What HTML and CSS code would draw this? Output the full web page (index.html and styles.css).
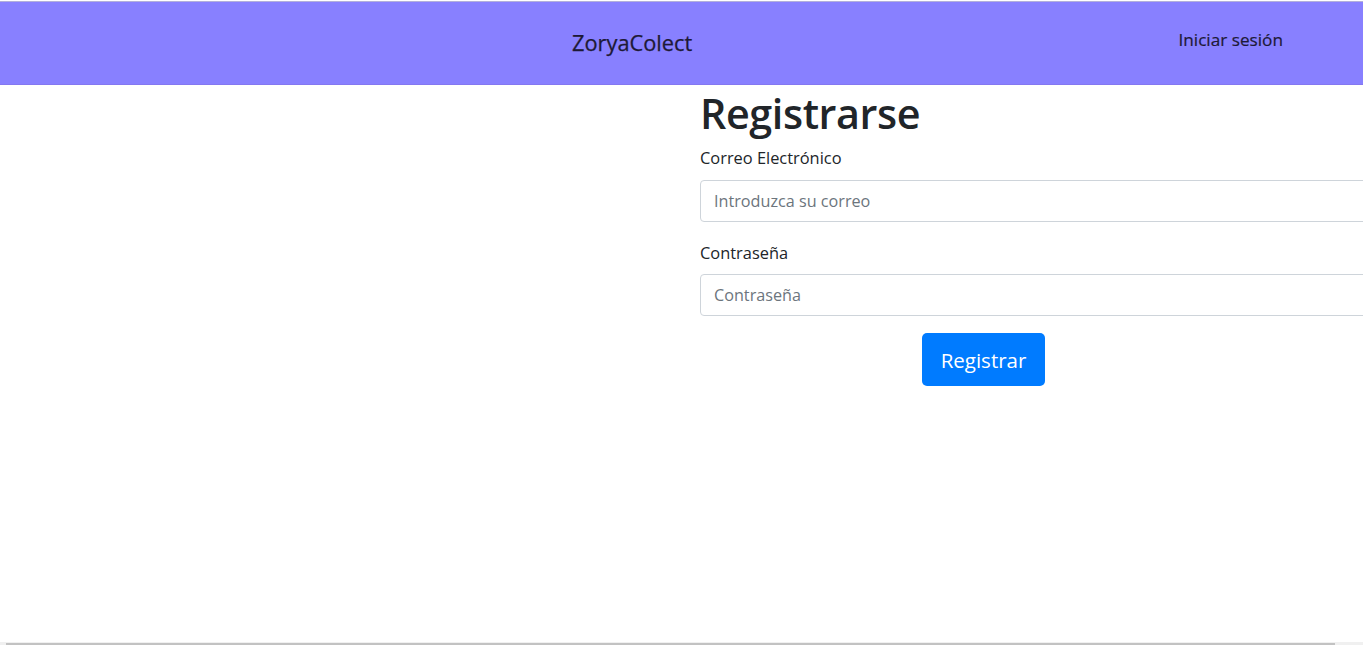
FILE: index.html
```html
<!DOCTYPE html>
<html lang="es">
<head>
<meta charset="utf-8">
<title>ZoryaColect - Registrarse</title>
<link rel="stylesheet" href="styles.css">
</head>
<body>
<header class="navbar">
  <a class="brand" href="#">ZoryaColect</a>
  <a class="nav-link" href="#">Iniciar sesión</a>
</header>
<main class="row">
  <div class="col-left"></div>
  <div class="col-form">
    <h1 class="title">Registrarse</h1>
    <form class="form">
      <div class="group">
        <label class="label" for="email">Correo Electrónico</label>
        <input class="input" id="email" type="email" placeholder="Introduzca su correo">
      </div>
      <div class="group">
        <label class="label label-pass" for="pass">Contraseña</label>
        <input class="input" id="pass" type="password" placeholder="Contraseña">
      </div>
      <div class="actions">
        <button class="btn" type="button">Registrar</button>
      </div>
    </form>
  </div>
</main>
<div class="hscroll"><div class="hscroll-thumb"></div></div>
</body>
</html>
```
FILE: styles.css
```css
html, body {
  margin: 0;
  padding: 0;
  overflow: hidden;
  height: 100%;
}
body {
  font-family: "Open Sans", "Noto Sans", sans-serif;
  color: #212529;
  background: #fff;
  position: relative;
}
.navbar {
  margin-top: 1px;
  border-top: 1px solid #b3b0da;
  height: 82px;
  background: #8880ff;
  border-bottom: 1px solid #8478f0;
  display: flex;
  align-items: flex-start;
}
.brand {
  margin-left: 572px;
  margin-top: 27px;
  font-size: 21.8px;
  line-height: 28px;
  color: #1d1936;
  text-decoration: none;
  -webkit-text-stroke: 0.25px #1d1936;
}
.nav-link {
  margin-left: auto;
  margin-right: 80px;
  margin-top: 25px;
  font-size: 17.2px;
  line-height: 26px;
  color: #1d1936;
  text-decoration: none;
  -webkit-text-stroke: 0.2px #1d1936;
}
.row {
  display: flex;
}
.col-left {
  width: 700px;
  flex: none;
}
.col-form {
  flex: none;
  width: 720px;
}
.title {
  margin: 3px 0 0 0;
  font-size: 41.3px;
  font-weight: 600;
  line-height: 50px;
  letter-spacing: -0.4px;
}
.form {
  margin-top: 7px;
}
.group {
  margin-bottom: 17px;
}
.label {
  display: block;
  font-size: 16.4px;
  line-height: 26px;
  margin-bottom: 9px;
}
.label-pass {
  padding-top: 1px;
  margin-bottom: 8px;
}
.input {
  box-sizing: border-box;
  display: block;
  width: 720px;
  height: 42px;
  padding: 6px 13px;
  border: 1px solid #ced4da;
  border-radius: 4px;
  font-family: inherit;
  font-size: 16.2px;
  color: #495057;
  background: #fff;
}
.input::placeholder {
  color: #6c757d;
}
.actions {
  width: 567px;
  display: flex;
  justify-content: center;
  margin-top: 3px;
}
.btn {
  width: 123px;
  height: 53px;
  border: none;
  border-radius: 5px;
  background: #007bff;
  color: #fff;
  font-family: inherit;
  font-size: 20.5px;
  cursor: pointer;
}
.hscroll {
  position: absolute;
  left: 0;
  right: 0;
  bottom: 0;
  height: 3px;
  background: #f0f0f0;
}
.hscroll-thumb {
  margin: 1px 28px 0 6px;
  height: 2px;
  background: #c2c2c2;
}
```
